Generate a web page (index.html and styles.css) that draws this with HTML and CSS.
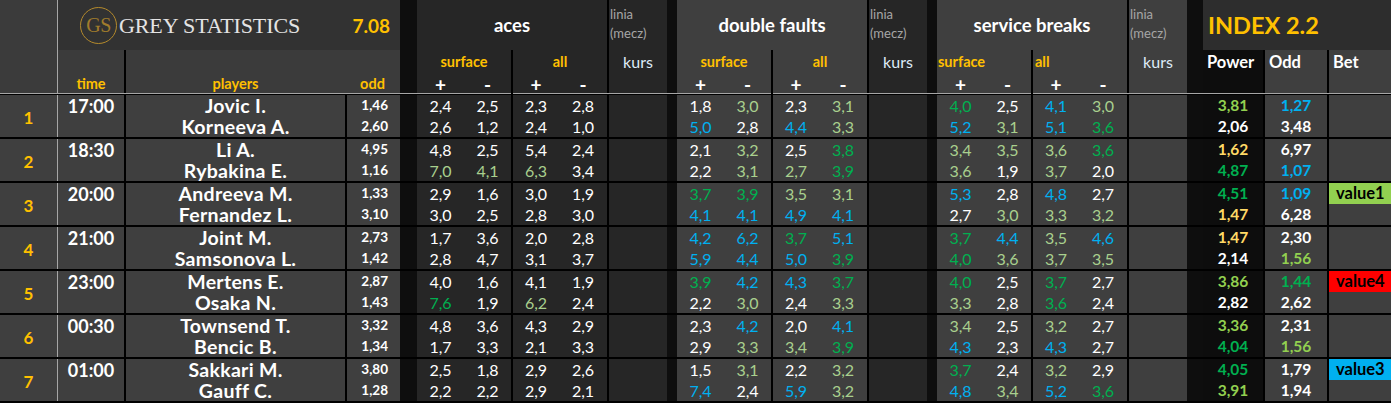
FILE: index.html
```html
<!DOCTYPE html>
<html lang="pl">
<head>
<meta charset="utf-8">
<title>Grey Statistics</title>
<link rel="stylesheet" href="styles.css">
</head>
<body>
<div class="sheet">
  <div class="hdr">
    <div class="h-num"></div>
    <div class="h-left">
      <div class="logo-row">
        <span class="gs">GS</span>
        <span class="brand">GREY STATISTICS</span>
        <span class="ver">7.08</span>
      </div>
      <div class="h-labels">
        <div class="hl-time">time</div>
        <div class="hl-players">players</div>
        <div class="hl-odd">odd</div>
      </div>
    </div>
    <div class="gap gap-wide"></div>
    <div class="h-sec dk">
      <div class="h-title">aces</div>
      <div class="h-split"><div>surface</div><div>all</div></div>
      <div class="h-pm"><span>+</span><span>-</span><span>+</span><span>-</span></div>
    </div>
    <div class="h-linia dk">
      <div class="linia">linia<br>(mecz)</div>
      <div class="kurs">kurs</div>
    </div>
    <div class="gap"></div>
    <div class="h-sec md">
      <div class="h-title">double faults</div>
      <div class="h-split"><div>surface</div><div>all</div></div>
      <div class="h-pm"><span>+</span><span>-</span><span>+</span><span>-</span></div>
    </div>
    <div class="h-linia dk">
      <div class="linia">linia<br>(mecz)</div>
      <div class="kurs">kurs</div>
    </div>
    <div class="gap"></div>
    <div class="h-sec md">
      <div class="h-title">service breaks</div>
      <div class="h-split left"><div>surface</div><div>all</div></div>
      <div class="h-pm"><span>+</span><span>-</span><span>+</span><span>-</span></div>
    </div>
    <div class="h-linia md">
      <div class="linia">linia<br>(mecz)</div>
      <div class="kurs">kurs</div>
    </div>
    <div class="gap gap-index"></div>
    <div class="h-index">
      <div class="index-title">INDEX 2.2</div>
      <div class="index-cols">
        <div class="ix-power">Power</div>
        <div class="ix-odd">Odd</div>
        <div class="ix-bet">Bet</div>
      </div>
    </div>
  </div>
  <div class="hdr-line"></div>

  <div class="rows">
    <!-- 1 -->
    <div class="match">
      <div class="c-num">1</div>
      <div class="c-time">17:00</div>
      <div class="c-players"><span>Jovic I.</span><span>Korneeva A.</span></div>
      <div class="c-odd"><span>1,46</span><span>2,60</span></div>
      <div class="c-gap"></div>
      <div class="c-sec dk"><span>2,4</span><span>2,5</span><span>2,3</span><span>2,8</span><span>2,6</span><span>1,2</span><span>2,4</span><span>1,0</span></div>
      <div class="c-linia dk"></div>
      <div class="c-gap"></div>
      <div class="c-sec md"><span>1,8</span><span class="lg">3,0</span><span>2,3</span><span class="lg">3,1</span><span class="b">5,0</span><span>2,8</span><span class="b">4,4</span><span class="lg">3,3</span></div>
      <div class="c-linia dk"></div>
      <div class="c-gap"></div>
      <div class="c-sec md"><span class="g">4,0</span><span>2,5</span><span class="b">4,1</span><span class="lg">3,0</span><span class="b">5,2</span><span class="lg">3,1</span><span class="b">5,1</span><span class="g">3,6</span></div>
      <div class="c-linia md"></div>
      <div class="c-gap"></div>
      <div class="c-power"><span class="li">3,81</span><span>2,06</span></div>
      <div class="c-odd2"><span class="b">1,27</span><span>3,48</span></div>
      <div class="c-bet"><span></span><span></span></div>
    </div>
    <!-- 2 -->
    <div class="match">
      <div class="c-num">2</div>
      <div class="c-time">18:30</div>
      <div class="c-players"><span>Li A.</span><span>Rybakina E.</span></div>
      <div class="c-odd"><span>4,95</span><span>1,16</span></div>
      <div class="c-gap"></div>
      <div class="c-sec dk"><span>4,8</span><span>2,5</span><span>5,4</span><span>2,4</span><span class="lg">7,0</span><span class="lg">4,1</span><span class="lg">6,3</span><span>3,4</span></div>
      <div class="c-linia dk"></div>
      <div class="c-gap"></div>
      <div class="c-sec md"><span>2,1</span><span class="lg">3,2</span><span>2,5</span><span class="g">3,8</span><span>2,2</span><span class="lg">3,1</span><span class="lg">2,7</span><span class="g">3,9</span></div>
      <div class="c-linia dk"></div>
      <div class="c-gap"></div>
      <div class="c-sec md"><span class="lg">3,4</span><span class="lg">3,5</span><span class="lg">3,6</span><span class="g">3,6</span><span class="lg">3,6</span><span>1,9</span><span class="lg">3,7</span><span>2,0</span></div>
      <div class="c-linia md"></div>
      <div class="c-gap"></div>
      <div class="c-power"><span class="y">1,62</span><span class="g">4,87</span></div>
      <div class="c-odd2"><span>6,97</span><span class="b">1,07</span></div>
      <div class="c-bet"><span></span><span></span></div>
    </div>
    <!-- 3 -->
    <div class="match">
      <div class="c-num">3</div>
      <div class="c-time">20:00</div>
      <div class="c-players"><span>Andreeva M.</span><span>Fernandez L.</span></div>
      <div class="c-odd"><span>1,33</span><span>3,10</span></div>
      <div class="c-gap"></div>
      <div class="c-sec dk"><span>2,9</span><span>1,6</span><span>3,0</span><span>1,9</span><span>3,0</span><span>2,5</span><span>2,8</span><span>3,0</span></div>
      <div class="c-linia dk"></div>
      <div class="c-gap"></div>
      <div class="c-sec md"><span class="g">3,7</span><span class="g">3,9</span><span class="lg">3,5</span><span class="lg">3,1</span><span class="b">4,1</span><span class="b">4,1</span><span class="b">4,9</span><span class="b">4,1</span></div>
      <div class="c-linia dk"></div>
      <div class="c-gap"></div>
      <div class="c-sec md"><span class="b">5,3</span><span>2,8</span><span class="b">4,8</span><span>2,7</span><span>2,7</span><span class="lg">3,0</span><span class="lg">3,3</span><span class="lg">3,2</span></div>
      <div class="c-linia md"></div>
      <div class="c-gap"></div>
      <div class="c-power"><span class="g">4,51</span><span class="y">1,47</span></div>
      <div class="c-odd2"><span class="b">1,09</span><span>6,28</span></div>
      <div class="c-bet"><span class="badge badge-green">value1</span><span></span></div>
    </div>
    <!-- 4 -->
    <div class="match">
      <div class="c-num">4</div>
      <div class="c-time">21:00</div>
      <div class="c-players"><span>Joint M.</span><span>Samsonova L.</span></div>
      <div class="c-odd"><span>2,73</span><span>1,42</span></div>
      <div class="c-gap"></div>
      <div class="c-sec dk"><span>1,7</span><span>3,6</span><span>2,0</span><span>2,8</span><span>2,8</span><span>4,7</span><span>3,1</span><span>3,7</span></div>
      <div class="c-linia dk"></div>
      <div class="c-gap"></div>
      <div class="c-sec md"><span class="b">4,2</span><span class="b">6,2</span><span class="g">3,7</span><span class="b">5,1</span><span class="b">5,9</span><span class="b">4,4</span><span class="b">5,0</span><span class="g">3,9</span></div>
      <div class="c-linia dk"></div>
      <div class="c-gap"></div>
      <div class="c-sec md"><span class="g">3,7</span><span class="b">4,4</span><span class="lg">3,5</span><span class="b">4,6</span><span class="g">4,0</span><span class="lg">3,6</span><span class="lg">3,7</span><span class="lg">3,5</span></div>
      <div class="c-linia md"></div>
      <div class="c-gap"></div>
      <div class="c-power"><span class="y">1,47</span><span>2,14</span></div>
      <div class="c-odd2"><span>2,30</span><span class="li">1,56</span></div>
      <div class="c-bet"><span></span><span></span></div>
    </div>
    <!-- 5 -->
    <div class="match">
      <div class="c-num">5</div>
      <div class="c-time">23:00</div>
      <div class="c-players"><span>Mertens E.</span><span>Osaka N.</span></div>
      <div class="c-odd"><span>2,87</span><span>1,43</span></div>
      <div class="c-gap"></div>
      <div class="c-sec dk"><span>4,0</span><span>1,6</span><span>4,1</span><span>1,9</span><span class="g">7,6</span><span>1,9</span><span class="lg">6,2</span><span>2,4</span></div>
      <div class="c-linia dk"></div>
      <div class="c-gap"></div>
      <div class="c-sec md"><span class="g">3,9</span><span class="b">4,2</span><span class="b">4,3</span><span class="g">3,7</span><span>2,2</span><span class="lg">3,0</span><span>2,4</span><span class="lg">3,3</span></div>
      <div class="c-linia dk"></div>
      <div class="c-gap"></div>
      <div class="c-sec md"><span class="g">4,0</span><span>2,5</span><span class="g">3,7</span><span>2,7</span><span class="lg">3,3</span><span>2,8</span><span class="g">3,6</span><span>2,4</span></div>
      <div class="c-linia md"></div>
      <div class="c-gap"></div>
      <div class="c-power"><span class="li">3,86</span><span>2,82</span></div>
      <div class="c-odd2"><span class="g">1,44</span><span>2,62</span></div>
      <div class="c-bet"><span class="badge badge-red">value4</span><span></span></div>
    </div>
    <!-- 6 -->
    <div class="match">
      <div class="c-num">6</div>
      <div class="c-time">00:30</div>
      <div class="c-players"><span>Townsend T.</span><span>Bencic B.</span></div>
      <div class="c-odd"><span>3,32</span><span>1,34</span></div>
      <div class="c-gap"></div>
      <div class="c-sec dk"><span>4,8</span><span>3,6</span><span>4,3</span><span>2,9</span><span>1,7</span><span>3,3</span><span>2,1</span><span>3,3</span></div>
      <div class="c-linia dk"></div>
      <div class="c-gap"></div>
      <div class="c-sec md"><span>2,3</span><span class="b">4,2</span><span>2,0</span><span class="b">4,1</span><span>2,9</span><span class="lg">3,3</span><span class="lg">3,4</span><span class="g">3,9</span></div>
      <div class="c-linia dk"></div>
      <div class="c-gap"></div>
      <div class="c-sec md"><span class="lg">3,4</span><span>2,5</span><span class="lg">3,2</span><span>2,7</span><span class="b">4,3</span><span>2,3</span><span class="b">4,3</span><span>2,7</span></div>
      <div class="c-linia md"></div>
      <div class="c-gap"></div>
      <div class="c-power"><span class="li">3,36</span><span class="g">4,04</span></div>
      <div class="c-odd2"><span>2,31</span><span class="li">1,56</span></div>
      <div class="c-bet"><span></span><span></span></div>
    </div>
    <!-- 7 -->
    <div class="match">
      <div class="c-num">7</div>
      <div class="c-time">01:00</div>
      <div class="c-players"><span>Sakkari M.</span><span>Gauff C.</span></div>
      <div class="c-odd"><span>3,80</span><span>1,28</span></div>
      <div class="c-gap"></div>
      <div class="c-sec dk"><span>2,5</span><span>1,8</span><span>2,9</span><span>2,6</span><span>2,2</span><span>2,2</span><span>2,9</span><span>2,1</span></div>
      <div class="c-linia dk"></div>
      <div class="c-gap"></div>
      <div class="c-sec md"><span>1,5</span><span class="lg">3,1</span><span>2,2</span><span class="lg">3,2</span><span class="b">7,4</span><span>2,4</span><span class="b">5,9</span><span class="lg">3,2</span></div>
      <div class="c-linia dk"></div>
      <div class="c-gap"></div>
      <div class="c-sec md"><span class="g">3,7</span><span>2,4</span><span class="lg">3,2</span><span>2,9</span><span class="b">4,8</span><span class="lg">3,4</span><span class="b">5,2</span><span class="g">3,6</span></div>
      <div class="c-linia md"></div>
      <div class="c-gap"></div>
      <div class="c-power"><span class="g">4,05</span><span class="li">3,91</span></div>
      <div class="c-odd2"><span>1,79</span><span>1,94</span></div>
      <div class="c-bet"><span class="badge badge-blue">value3</span><span></span></div>
    </div>
  </div>
</div>
</body>
</html>
```

FILE: styles.css
```css
* { box-sizing: border-box; margin: 0; padding: 0; }

body {
  margin: 0;
  background: #000;
  width: 1391px;
  height: 403px;
  overflow: hidden;
  font-family: Lato, "Open Sans", "DejaVu Sans", sans-serif;
  color: #fff;
}

.sheet { width: 1391px; }

.dk { background: #262626; }
.md { background: #3f3f3f; }

/* ---------- header ---------- */
.hdr { display: flex; height: 93px; }

.h-num { width: 58px; background: #3b3b3b; border-right: 1px solid #a6a6a6; }

.h-left { width: 342px; display: flex; flex-direction: column; }
.logo-row {
  height: 50px;
  background: #323232;
  display: flex;
  align-items: center;
  padding-left: 22px;
  padding-right: 10px;
}
.gs {
  width: 37px;
  height: 37px;
  border: 1.5px solid #b48a2c;
  border-radius: 50%;
  display: flex;
  align-items: center;
  justify-content: center;
  font-family: "Liberation Serif", serif;
  font-size: 20px;
  color: #a07c2c;
  letter-spacing: -0.5px;
  padding-top: 1px;
}
.brand {
  margin-left: 2px;
  font-family: "Liberation Serif", serif;
  font-size: 22px;
  color: #e4e4e4;
  letter-spacing: -0.1px;
  padding-top: 2px;
}
.ver {
  margin-left: auto;
  font-weight: 700;
  font-size: 19px;
  color: #ffc000;
}
.h-labels {
  height: 43px;
  display: flex;
  background: #3b3b3b;
  font-weight: 700;
  font-size: 14.5px;
  color: #ffc000;
}
.h-labels > div { display: flex; align-items: flex-end; justify-content: center; padding-bottom: 1px; }
.hl-time { width: 66px; }
.hl-players { width: 221px; border-left: 2px solid #000; }
.hl-odd { width: 55px; }

.gap { width: 10px; background: #0e0e0e; }
.gap-wide { width: 17px; }
.gap-index { width: 16px; }

.h-sec { width: 190px; display: flex; flex-direction: column; }
.h-title {
  height: 50px;
  display: flex;
  align-items: center;
  justify-content: center;
  font-weight: 700;
  font-size: 18.5px;
  padding-bottom: 1px;
}
.h-split {
  height: 22px;
  display: grid;
  grid-template-columns: 94px 96px;
  font-weight: 700;
  font-size: 14.5px;
  color: #ffc000;
}
.h-split > div { display: flex; align-items: center; justify-content: center; }
.h-split > div + div { border-left: 2px solid #000; }
.h-split.left > div { justify-content: flex-start; padding-left: 1px; }
.h-split.left > div + div { padding-left: 2px; }
.h-pm {
  height: 21px;
  display: grid;
  grid-template-columns: 47px 47px 48px 48px;
  font-weight: 700;
  font-size: 19px;
  line-height: 21px;
}
.h-pm span { text-align: center; padding-top: 2px; }
.h-pm span:nth-child(3) { border-left: 2px solid #000; }

.h-linia { width: 60px; border-left: 2px solid #000; display: flex; flex-direction: column; }
.linia {
  height: 50px;
  font-size: 13px;
  line-height: 19px;
  color: #a6a6a6;
  padding: 5px 0 0 1px;
}
.kurs {
  height: 22px;
  display: flex;
  align-items: center;
  justify-content: center;
  font-size: 16px;
  color: #ddebf7;
}

.h-index { width: 188px; display: flex; flex-direction: column; }
.index-title {
  height: 50px;
  background: #2d2d2d;
  display: flex;
  align-items: center;
  padding-left: 5px;
  font-weight: 700;
  font-size: 23.5px;
  color: #ffc000;
}
.index-cols { height: 43px; display: flex; font-weight: 700; font-size: 16.5px; line-height: 20px; }
.index-cols > div { padding: 2px 0 0 4px; }
.ix-power { width: 60px; background: #0d0d0d; }
.ix-odd { width: 64px; background: #3f3f3f; border-left: 2px solid #000; }
.ix-bet { width: 64px; background: #3f3f3f; border-left: 2px solid #000; }

.hdr-line { height: 1px; background: #a6a6a6; }

/* ---------- body rows ---------- */
.rows {
  display: flex;
  flex-direction: column;
  gap: 2px;
  padding-top: 1px;
}
.match {
  display: grid;
  grid-template-columns: 58px 66px 221px 55px 17px 190px 60px 10px 190px 60px 10px 190px 60px 16px 60px 64px 64px;
  height: 42px;
}

.c-num {
  background: #3f3f3f;
  border-right: 1px solid #a6a6a6;
  display: flex;
  align-items: center;
  justify-content: center;
  font-weight: 700;
  font-size: 17px;
  color: #ffc000;
  padding-top: 2px;
}
.c-time {
  background: #3f3f3f;
  text-align: center;
  font-weight: 700;
  font-size: 18px;
  line-height: 22px;
}
.c-players {
  background: #3f3f3f;
  border-left: 2px solid #000;
  display: flex;
  flex-direction: column;
  align-items: center;
  font-weight: 700;
  font-size: 19.5px;
  letter-spacing: 0.3px;
  line-height: 21px;
}
.c-odd {
  background: #3f3f3f;
  border-left: 2px solid #000;
  display: flex;
  flex-direction: column;
  align-items: flex-end;
  padding-right: 12px;
  font-weight: 700;
  font-size: 13.5px;
  line-height: 21px;
}
.c-gap { background: #0e0e0e; }

.c-sec {
  display: grid;
  grid-template-columns: 47px 47px 48px 48px;
  grid-template-rows: 21px 21px;
  font-size: 16px;
  line-height: 21px;
}
.c-sec span { text-align: center; }
.c-sec span:nth-child(3), .c-sec span:nth-child(7) { border-left: 2px solid #000; }

.c-linia { border-left: 2px solid #000; }

.c-power, .c-odd2 {
  display: flex;
  flex-direction: column;
  align-items: center;
  font-weight: 700;
  font-size: 15.5px;
  line-height: 21px;
}
.c-power { background: #0d0d0d; }
.c-odd2 { background: #3f3f3f; border-left: 2px solid #000; }

.c-bet {
  background: #3f3f3f;
  border-left: 2px solid #000;
  display: grid;
  grid-template-rows: 21px 21px;
}
.badge {
  display: block;
  padding-left: 7px;
  font-weight: 700;
  font-size: 16.5px;
  line-height: 21px;
  color: #000;
}
.badge-green { background: #92d050; }
.badge-red { background: #ff0000; }
.badge-blue { background: #00b0f0; }

/* ---------- value colours ---------- */
.lg { color: #a9d08e; }
.g { color: #00b050; }
.b { color: #00b0f0; }
.y { color: #ffd966; }
.li { color: #92d050; }
```
